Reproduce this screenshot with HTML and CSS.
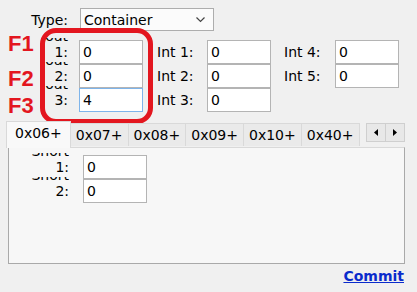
FILE: index.html
```html
<!DOCTYPE html>
<html lang="en">
<head>
  <meta charset="UTF-8" />
  <title>Container fields</title>
  <link rel="stylesheet" href="styles.css">
</head>
<body>

  <div class="type-row">
    <label class="type-label">Type:</label>
    <div class="select">
      <span>Container</span>
      <svg class="chevron" width="9" height="6" viewBox="0 0 9 6"><path d="M0.5 0.5 L4.5 4.5 L8.5 0.5" fill="none" stroke="#444" stroke-width="1.2"/></svg>
    </div>
  </div>

  <div class="fields">
    <!-- annotations -->
    <div class="marks">
      <span class="mark m1">F1</span>
      <span class="mark m2">F2</span>
      <span class="mark m3">F3</span>
    </div>

    <div class="float-box grid">
      <label class="lbl"><span class="cut">Float</span><span>1:</span></label>
      <input class="field" type="text" value="0" />
      <label class="lbl"><span class="cut">Float</span><span>2:</span></label>
      <input class="field" type="text" value="0" />
      <label class="lbl"><span class="cut">Float</span><span>3:</span></label>
      <input class="field focused" type="text" value="4" />
    </div>

    <div class="group grid int-a">
      <label class="int-lbl">Int 1:</label>
      <input class="field" type="text" value="0" />
      <label class="int-lbl">Int 2:</label>
      <input class="field" type="text" value="0" />
      <label class="int-lbl">Int 3:</label>
      <input class="field" type="text" value="0" />
    </div>

    <div class="group grid int-b">
      <label class="int-lbl">Int 4:</label>
      <input class="field" type="text" value="0" />
      <label class="int-lbl">Int 5:</label>
      <input class="field" type="text" value="0" />
    </div>
  </div>

  <div class="tabs">
    <div class="tab-strip">
      <div class="tab active">0x06+</div>
      <div class="tab">0x07+</div>
      <div class="tab">0x08+</div>
      <div class="tab">0x09+</div>
      <div class="tab">0x10+</div>
      <div class="tab">0x40+</div>
      <div class="scroll">
        <div class="scroll-btn"><svg width="4" height="7" viewBox="0 0 4 7"><path d="M4 0 L0 3.5 L4 7 Z" fill="#000"/></svg></div>
        <div class="scroll-btn"><svg width="4" height="7" viewBox="0 0 4 7"><path d="M0 0 L4 3.5 L0 7 Z" fill="#000"/></svg></div>
      </div>
    </div>
    <div class="tab-panel">
      <div class="grid short-grid">
        <label class="lbl"><span class="cut">Short</span><span>1:</span></label>
        <input class="field" type="text" value="0" />
        <label class="lbl"><span class="cut">Short</span><span>2:</span></label>
        <input class="field" type="text" value="0" />
      </div>
    </div>
  </div>

  <div class="footer">
    <a class="commit">Commit</a>
  </div>

</body>
</html>
```

FILE: styles.css
```css
body {
  margin: 0;
  padding: 8px 0 0 0;
  background-color: #f0f0f0;
  font-family: 'DejaVu Sans', Verdana, sans-serif;
  font-size: 14px;
  color: #000;
  width: 417px;
  height: 292px;
  overflow: hidden;
}

.type-row {
  display: flex;
  align-items: center;
  height: 23px;
}

.type-label {
  width: 68px;
  text-align: right;
  margin-right: 12px;
}

.select {
  box-sizing: border-box;
  width: 134px;
  height: 23px;
  border: 1px solid #adadad;
  background-color: #fbfbfb;
  display: flex;
  align-items: center;
  justify-content: space-between;
  padding: 0 8px 0 3px;
}

.chevron {
  display: block;
}

.fields {
  display: flex;
  align-items: flex-start;
  margin-top: -3px;
}

.marks {
  width: 40px;
  display: flex;
  flex-direction: column;
  padding-left: 8px;
  box-sizing: border-box;
}

.mark {
  font-family: 'Liberation Sans', Arial, sans-serif;
  font-weight: bold;
  font-size: 22px;
  line-height: 22px;
  color: #e3161f;
}

.m1 { margin-top: 5px; }
.m2 { margin-top: 13px; }
.m3 { margin-top: 5px; }

.grid {
  display: grid;
  grid-auto-rows: 24px;
  align-items: start;
}

.float-box {
  border: 5px solid #e3161f;
  border-radius: 16px;
  padding: 7px 5px 7px 0;
  grid-template-columns: 26px 64px;
  column-gap: 8px;
}

.lbl {
  box-sizing: border-box;
  height: 26px;
  margin-top: -2px;
  padding: 0 3px 4px 0;
  overflow: hidden;
  display: flex;
  flex-direction: column;
  justify-content: flex-end;
  align-items: flex-end;
  line-height: 16px;
  white-space: nowrap;
}

.lbl .cut {
  margin-bottom: 0;
}

.field {
  box-sizing: border-box;
  width: 64px;
  height: 24px;
  margin: 0;
  border: 1px solid #b4b4b4;
  background-color: #fff;
  font-family: 'DejaVu Sans', Verdana, sans-serif;
  font-size: 14px;
  padding: 0 3px;
  color: #000;
  outline: none;
}

.field.focused {
  border-color: #7eb4ea;
}

.group {
  margin-top: 12px;
}

.int-a {
  margin-left: 4px;
  grid-template-columns: 50px 64px;
}

.int-b {
  margin-left: 13px;
  grid-template-columns: 51px 64px;
}

.int-lbl {
  line-height: 24px;
}

.tabs {
  margin-top: -4px;
}

.tab-strip {
  display: flex;
  align-items: flex-end;
  height: 27px;
  padding-left: 6px;
  width: 405px;
  box-sizing: border-box;
}

.tab {
  box-sizing: border-box;
  height: 23px;
  padding: 0 5px;
  border: 1px solid #d9d9d9;
  border-bottom: none;
  border-left: none;
  background-color: #eaeaea;
  line-height: 23px;
  margin-bottom: 1px;
}

.tab.active {
  height: 27px;
  padding: 0 8px 0 8px;
  border-left: 1px solid #d9d9d9;
  background-color: #f9f9f9;
  line-height: 22px;
  margin-bottom: -1px;
  position: relative;
  z-index: 1;
}

.scroll {
  display: flex;
  margin-left: auto;
  align-self: flex-start;
  margin-top: 3px;
}

.scroll-btn {
  box-sizing: border-box;
  width: 20px;
  height: 19px;
  border: 1px solid #cfcfcf;
  background-color: #e8e8e8;
  display: flex;
  align-items: center;
  justify-content: center;
}

.scroll-btn + .scroll-btn {
  border-left: none;
  width: 19px;
}

.tab-panel {
  box-sizing: border-box;
  margin-left: 8px;
  width: 397px;
  height: 117px;
  border: 1px solid #a9a9a9;
  border-top-color: #d9d9d9;
  background-color: #f7f7f7;
  padding: 7px 0 0 21px;
}

.short-grid {
  grid-template-columns: 42px 64px;
  column-gap: 11px;
}

.footer {
  text-align: right;
  padding: 4px 13px 0 0;
}

.commit {
  font-weight: bold;
  font-size: 14px;
  color: #0a2bcc;
  text-decoration: underline;
  cursor: pointer;
}
```
